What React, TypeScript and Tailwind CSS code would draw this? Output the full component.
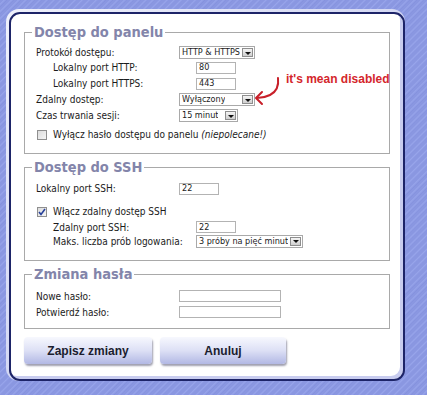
import React from "react";

const lab = "font-['DejaVu_Sans_Condensed','DejaVu_Sans',sans-serif] text-[10px] text-[#1b1b1b]";
const ctl = "font-['DejaVu_Sans_Condensed','DejaVu_Sans',sans-serif] text-[9px] text-[#1b1b1b]";

function Input({ w, value }: { w: number; value?: string }) {
  return (
    <div
      className={`h-[12px] border border-[#b3b3b3] bg-white px-[2px] flex items-center leading-none ${ctl}`}
      style={{ width: w }}
    >
      {value}
    </div>
  );
}

function Select({ w, value }: { w: number; value: string }) {
  return (
    <div
      className={`h-[13px] border border-[#a9a9a9] bg-white pl-[2px] pr-[1px] flex items-center justify-between leading-none ${ctl}`}
      style={{ width: w }}
    >
      <span className="whitespace-nowrap overflow-hidden">{value}</span>
      <span className="w-[11px] h-[9px] border border-[#8e8e8e] bg-gradient-to-b from-[#f4f4f4] to-[#cfcfcf] flex items-center justify-center shrink-0 ml-[2px]">
        <span className="w-0 h-0 border-l-[3px] border-r-[3px] border-t-[3px] border-l-transparent border-r-transparent border-t-[#111] mt-[1px]" />
      </span>
    </div>
  );
}

function Row({ label, indent, children, h = 15, className = "" }: { label: string; indent?: boolean; children?: React.ReactNode; h?: number; className?: string }) {
  return (
    <div className={`flex items-center ${indent ? "pl-[28px]" : "pl-[11px]"} ${className}`} style={{ height: h }}>
      <div className={`w-[143px] ${lab} whitespace-nowrap`}>{label}</div>
      {children}
    </div>
  );
}

function Check({ checked }: { checked?: boolean }) {
  return (
    <span className="w-[10px] h-[10px] border border-[#8f8f8f] bg-gradient-to-br from-[#dcdcdc] to-[#f5f5f5] flex items-center justify-center shrink-0">
      {checked && (
        <svg width="8" height="8" viewBox="0 0 8 8">
          <path d="M1 4 L3 6.5 L7 1" fill="none" stroke="#27409a" strokeWidth="1.6" />
        </svg>
      )}
    </span>
  );
}

function Legend({ children }: { children: React.ReactNode }) {
  return (
    <legend className="ml-[7px] px-[2px] font-['DejaVu_Sans_Condensed','DejaVu_Sans',sans-serif] font-bold text-[14.5px] leading-[20px] text-[#8385aa]">
      {children}
    </legend>
  );
}

function Button({ children, w }: { children: React.ReactNode; w: number }) {
  return (
    <div
      className="h-[27px] rounded-[4px] bg-gradient-to-b from-[#f7f8fe] via-[#dde0f5] to-[#b2b8e4] shadow-[1px_2px_2px_rgba(80,80,110,0.55)] flex items-center justify-center font-['Liberation_Sans',sans-serif] font-bold text-[12px] text-[#1b1d2e]"
      style={{ width: w }}
    >
      {children}
    </div>
  );
}

export default function App() {
  return (
    <div className="relative w-[427px] h-[395px] overflow-hidden bg-[#8b99e3] bg-[repeating-linear-gradient(135deg,#8a97e1_0px,#8a97e1_2px,#97a4ea_3px,#8592de_5px)] pt-[9px] pl-[6px]">
      <div className="w-[399px] h-[372px] rounded-[13px] bg-gradient-to-br from-[#eef0fb] to-[#b9bfea] pt-[3px] pl-[3px] flex">
        <div className="flex-1 rounded-[11px] border-2 border-[#1d2468] bg-white shadow-[inset_-3px_-3px_0_#c8ccef] px-[13px] pt-[8px] flex flex-col">
          <fieldset className="border border-[#a9a9a9] pb-[11px]">
            <Legend>Dostęp do panelu</Legend>
            <div className="pt-[3px]" />
            <Row label="Protokół dostępu:">
              <Select w={76} value="HTTP & HTTPS" />
            </Row>
            <Row label="Lokalny port HTTP:" indent>
              <Input w={40} value="80" />
            </Row>
            <Row label="Lokalny port HTTPS:" indent className="mt-[1px]">
              <Input w={40} value="443" />
            </Row>
            <Row label="Zdalny dostęp:" className="mt-[1px]">
              <Select w={76} value="Wyłączony" />
            </Row>
            <Row label="Czas trwania sesji:" className="mt-[1px]">
              <Select w={59} value="15 minut" />
            </Row>
            <div className={`flex items-center h-[15px] mt-[4px] pl-[12px] gap-[6px] ${lab}`}>
              <Check />
              <span>
                Wyłącz hasło dostępu do panelu <i>(niepolecane!)</i>
              </span>
            </div>
          </fieldset>

          <fieldset className="border border-[#a9a9a9] mt-[3px] pb-[12px]">
            <Legend>Dostęp do SSH</Legend>
            <div className="pt-[4px]" />
            <Row label="Lokalny port SSH:">
              <Input w={40} value="22" />
            </Row>
            <div className={`flex items-center h-[15px] mt-[8px] pl-[12px] gap-[6px] ${lab}`}>
              <Check checked />
              <span>Włącz zdalny dostęp SSH</span>
            </div>
            <Row label="Zdalny port SSH:" indent h={14} className="mt-[1px]">
              <Input w={40} value="22" />
            </Row>
            <Row label="Maks. liczba prób logowania:" indent h={14}>
              <Select w={107} value="3 próby na pięć minut" />
            </Row>
          </fieldset>

          <fieldset className="border border-[#a9a9a9] mt-[3px] pb-[9px]">
            <Legend>Zmiana hasła</Legend>
            <div className="pt-[5px]" />
            <Row label="Nowe hasło:" h={14}>
              <Input w={102} />
            </Row>
            <Row label="Potwierdź hasło:" h={14} className="mt-[2px]">
              <Input w={102} />
            </Row>
          </fieldset>

          <div className="flex gap-[8px] mt-[8px]">
            <Button w={128}>Zapisz zmiany</Button>
            <Button w={126}>Anuluj</Button>
          </div>
        </div>
      </div>

      <div className="absolute left-[286px] top-[72px] font-['Liberation_Sans',sans-serif] font-bold text-[12px] leading-[14px] text-[#d4262c] whitespace-nowrap">
        it's mean disabled
      </div>
      <svg className="absolute left-[250px] top-[70px]" width="40" height="40" viewBox="0 0 40 40">
        <path d="M28 8 C29 16 26 22 20 25 C16 27 12 28 7 28" fill="none" stroke="#c8202a" strokeWidth="2" strokeLinecap="round" />
        <path d="M12 22 L6 28 L12 34" fill="none" stroke="#c8202a" strokeWidth="2" strokeLinecap="round" strokeLinejoin="round" />
      </svg>
    </div>
  );
}
